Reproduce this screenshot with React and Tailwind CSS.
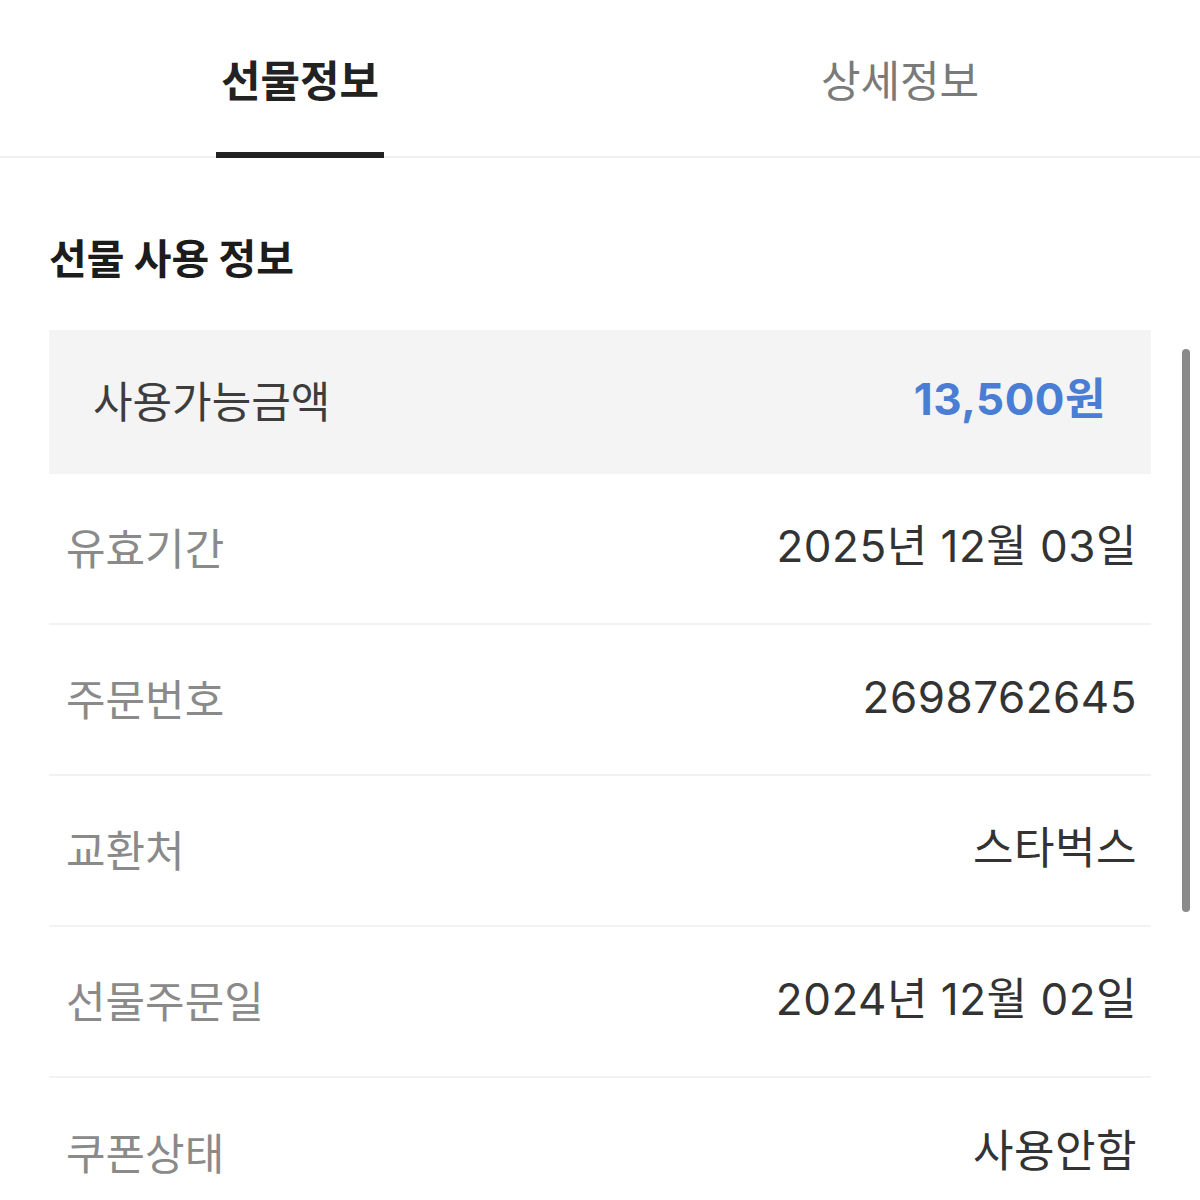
import React from "react";

const ROWS = [
  { label: "유효기간", value: "2025년 12월 03일" },
  { label: "주문번호", value: "2698762645" },
  { label: "교환처", value: "스타벅스" },
  { label: "선물주문일", value: "2024년 12월 02일" },
  { label: "쿠폰상태", value: "사용안함" },
];

const num = { fontFamily: 'Inter, "Noto Sans CJK KR", sans-serif' };

export default function App() {
  return (
    <div
      className="relative w-[1200px] h-[1200px] overflow-hidden bg-white"
      style={{ fontFamily: '"Noto Sans CJK KR", "Noto Sans", sans-serif' }}
    >
      {/* tabs */}
      <div className="flex h-[158px] border-b-2 border-[#f0f0f0]">
        <div className="relative flex w-1/2 items-start justify-center pt-[46px]">
          <span className="text-[43px] leading-[64px] font-bold text-[#222]">선물정보</span>
          <div className="absolute bottom-[-2px] left-[216px] h-[6px] w-[168px] bg-[#222]" />
        </div>
        <div className="flex w-1/2 items-start justify-center pt-[46px]">
          <span className="text-[43px] leading-[64px] text-[#7a7a7a]">상세정보</span>
        </div>
      </div>

      <div className="px-[49px]">
        <h2 className="pt-[70px] pb-[46px] text-[41px] leading-[56px] font-bold text-[#1c1c1c]">
          선물 사용 정보
        </h2>

        <div className="flex h-[144px] items-center justify-between bg-[#f4f4f4] pl-[44px] pr-[45px]">
          <span className="text-[43px] leading-[56px] text-[#3d3d3d] -translate-y-[3px]">사용가능금액</span>
          <span
            style={num}
            className="text-[44px] leading-[56px] tracking-[0.5px] font-bold text-[#4a7dd4] -translate-y-[3px]"
          >
            13,500원
          </span>
        </div>

        {ROWS.map((row, i) => (
          <div
            key={row.label}
            className={`flex h-[151px] items-center justify-between pl-[17px] pr-[14px] ${
              i < ROWS.length - 1 ? "border-b-2 border-[#f2f2f2]" : ""
            }`}
          >
            <span className="text-[43px] leading-[56px] text-[#8a8a8a] -translate-y-[3px]">{row.label}</span>
            <span style={num} className="text-[44px] leading-[56px] tracking-[0.5px] text-[#333] -translate-y-[3px]">
              {row.value}
            </span>
          </div>
        ))}
      </div>

      {/* scrollbar */}
      <div className="absolute left-[1182px] top-[349px] h-[563px] w-[8px] rounded-full bg-[#8a8a8a]" />
    </div>
  );
}
